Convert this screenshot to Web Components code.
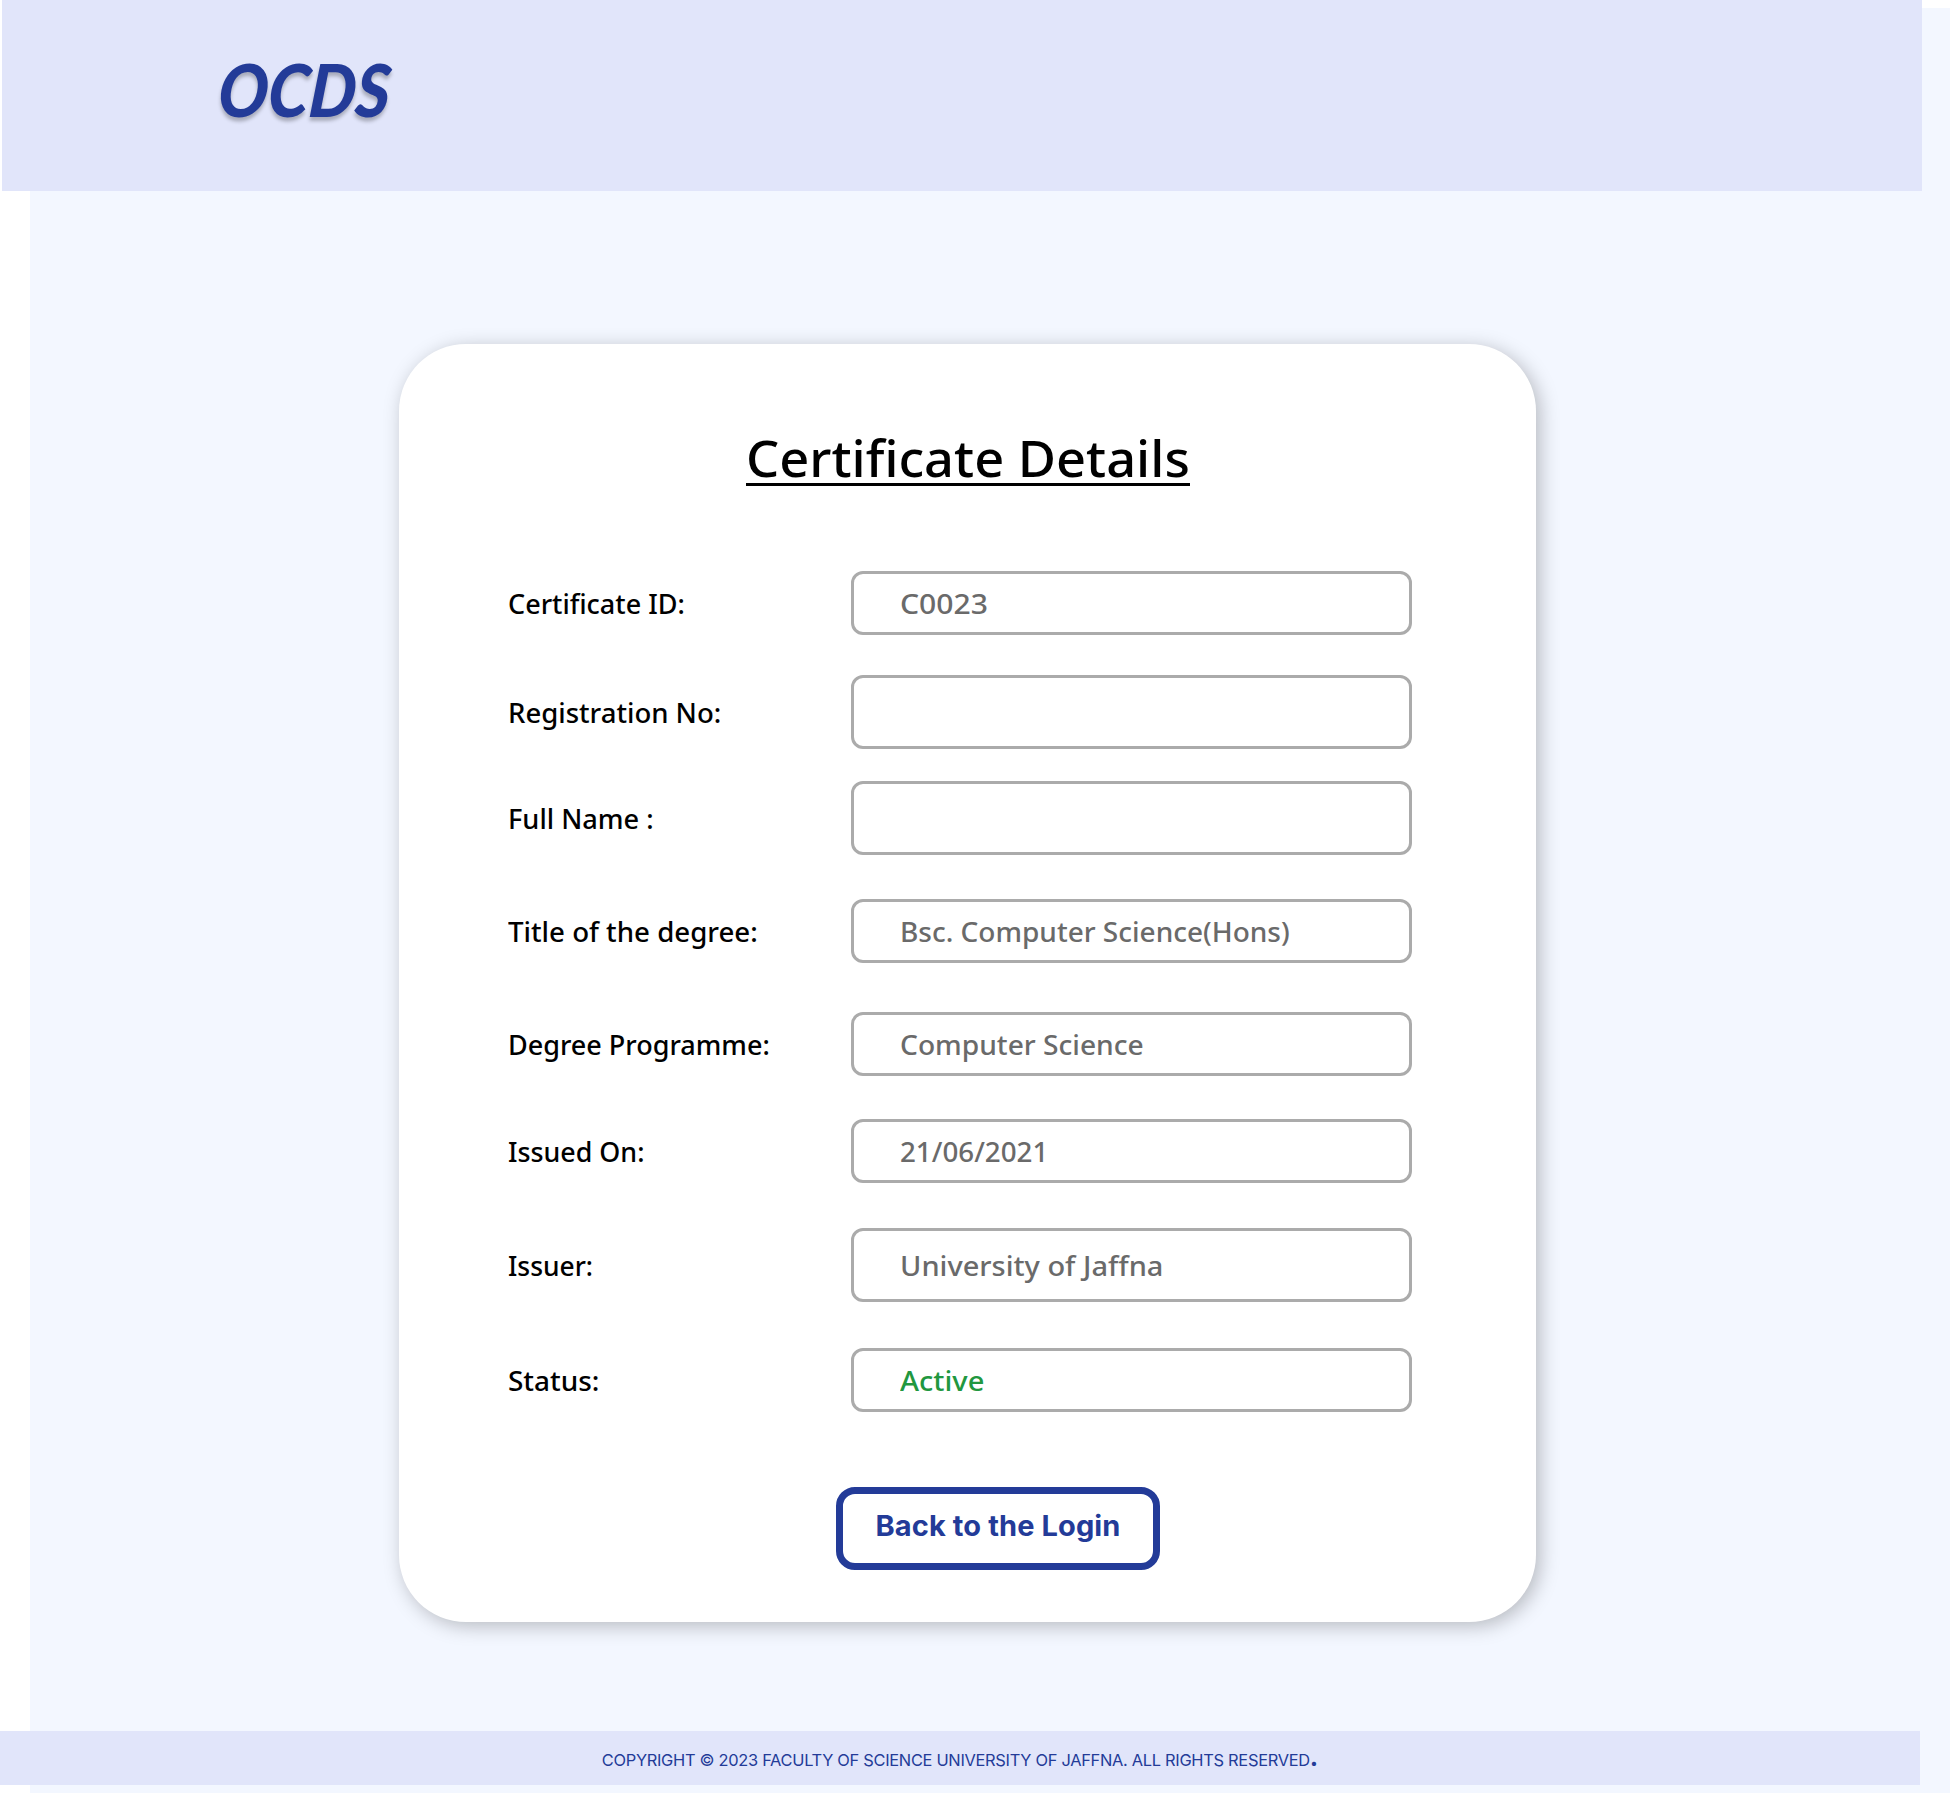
<!DOCTYPE html>
<html lang="en">
<head>
<meta charset="utf-8">
<title>OCDS - Certificate Details</title>
<style>
  body { margin: 0; background: #fff; font-family: "Noto Sans", "Open Sans", sans-serif; }
</style>
</head>
<body>
<ocds-page>
  <ocds-header slot="header"><fit-text width="172">OCDS</fit-text></ocds-header>
  <ocds-card>
    <ocds-title slot="title"><fit-text width="444">Certificate Details</fit-text></ocds-title>
    <ocds-field style="--gap:0px"><fit-text slot="label" width="177">Certificate ID:</fit-text><fit-text width="88">C0023</fit-text></ocds-field>
    <ocds-field style="--gap:40px;--h:74px"><fit-text slot="label" width="213">Registration No:</fit-text></ocds-field>
    <ocds-field style="--gap:32px;--h:74px"><fit-text slot="label" width="146">Full Name :</fit-text></ocds-field>
    <ocds-field style="--gap:44px"><fit-text slot="label" width="250">Title of the degree:</fit-text><fit-text width="390">Bsc. Computer Science(Hons)</fit-text></ocds-field>
    <ocds-field style="--gap:49px"><fit-text slot="label" width="262">Degree Programme:</fit-text><fit-text width="244">Computer Science</fit-text></ocds-field>
    <ocds-field style="--gap:43px"><fit-text slot="label" width="136">Issued On:</fit-text><fit-text width="148">21/06/2021</fit-text></ocds-field>
    <ocds-field style="--gap:45px;--h:74px"><fit-text slot="label" width="85">Issuer:</fit-text><fit-text width="263">University of Jaffna</fit-text></ocds-field>
    <ocds-field style="--gap:46px;--value:#21973f"><fit-text slot="label" width="91">Status:</fit-text><fit-text width="84">Active</fit-text></ocds-field>
    <ocds-button slot="action"><fit-text width="245" mode="track">Back to the Login</fit-text></ocds-button>
  </ocds-card>
  <ocds-footer slot="footer"><fit-text width="708" mode="track">COPYRIGHT © 2023 FACULTY OF SCIENCE UNIVERSITY OF JAFFNA. ALL RIGHTS RESERVED</fit-text></ocds-footer>
</ocds-page>

<script>
  const define = (name, html, ready) => customElements.define(name, class extends HTMLElement {
    connectedCallback() {
      if (this.shadowRoot) return;
      const t = document.createElement('template');
      t.innerHTML = html;
      this.attachShadow({ mode: 'open' }).append(t.content.cloneNode(true));
      if (ready) ready(this);
    }
  });

  define('ocds-page', `
    <style>
      :host { display: flex; flex-direction: column; width: 1950px; height: 1793px; overflow: hidden;
              background: linear-gradient(#f3f7ff, #f3f7ff) 30px 8px no-repeat, #fff; }
      main { flex: 1; display: flex; align-items: flex-start; padding: 153px 0 0 399px; }
    </style>
    <slot name="header"></slot>
    <main><slot></slot></main>
    <slot name="footer"></slot>`);

  define('ocds-header', `
    <style>
      :host { display: flex; align-items: center; box-sizing: border-box; width: 1920px; height: 191px;
              margin-left: 2px; padding-left: 217px; background: #e1e5fa; }
      div { font: italic 900 73px/88px Lato, sans-serif; color: #233b98; margin-top: -14px;
            text-shadow: 0 4px 4px rgba(0,0,0,.25); transform: skewX(-5deg); }
    </style>
    <div><slot></slot></div>`);

  define('ocds-card', `
    <style>
      :host { display: flex; flex-direction: column; box-sizing: border-box; width: 1137px; height: 1278px;
              padding-top: 85px; border-radius: 67px; background: #fff;
              box-shadow: 4px 4px 19px rgba(0,0,0,.25); }
      .head { display: flex; justify-content: center; height: 142px; }
      .fields { display: flex; flex-direction: column; padding-left: 108px; }
      .action { display: flex; padding: 75px 0 0 437px; }
    </style>
    <div class="head"><slot name="title"></slot></div>
    <div class="fields"><slot></slot></div>
    <div class="action"><slot name="action"></slot></div>`);

  define('ocds-title', `
    <style>
      :host { display: block; align-self: flex-start; padding-top: 4px; font-size: 50px; font-weight: 500;
              line-height: 50px; color: #000; border-bottom: 3px solid #000; }
    </style>
    <slot></slot>`);

  define('ocds-field', `
    <style>
      :host { display: flex; align-items: center; margin-top: var(--gap); height: var(--h, 64px);
              font-size: 27px; font-weight: 500; line-height: 36px; }
      .label { box-sizing: border-box; width: 344px; padding: 2px 0 0 1px; color: #000; }
      .box { display: flex; align-items: center; box-sizing: border-box; width: 561px; height: 100%;
             padding: 2px 0 0 46px; border: 3px solid #ababab; border-radius: 12px; color: var(--value, #6a6a6a); }
    </style>
    <div class="label"><slot name="label"></slot></div>
    <div class="box"><slot></slot></div>`);

  define('ocds-button', `
    <style>
      :host { display: block; }
      button { display: flex; align-items: center; justify-content: center; box-sizing: border-box;
               width: 324px; height: 83px; padding: 0 0 6px; border: 7px solid #233b98; border-radius: 19px;
               background: #fff; color: #233b98; font: 700 29px/36px Inter, sans-serif; }
    </style>
    <button><slot></slot></button>`);

  define('ocds-footer', `
    <style>
      :host { display: flex; align-items: center; justify-content: center; box-sizing: border-box;
              width: 1920px; height: 54px; margin-bottom: 8px; background: #e1e5fa;
              color: #233b98; font: 400 16.4px/24px Inter, sans-serif; }
      .line { display: flex; align-items: baseline; }
      b { font-size: 25px; line-height: 24px; }
    </style>
    <div class="line"><slot></slot><b>.</b></div>`);

  /* Sets a line of text to a fixed measure, by horizontal scale or by tracking. */
  define('fit-text', `<style>
      :host { display: block; white-space: nowrap; }
      span { display: inline-block; vertical-align: top; transform-origin: 0 50%; }
    </style><span><slot></slot></span>`, el => {
    const span = el.shadowRoot.querySelector('span');
    const target = +el.getAttribute('width');
    requestAnimationFrame(() => {
      const natural = span.getBoundingClientRect().width;
      el.style.width = target + 'px';
      if (el.getAttribute('mode') === 'track') span.style.letterSpacing = (target - natural) / el.textContent.length + 'px';
      else span.style.transform = `scaleX(${target / span.offsetWidth})`;
    });
  });
</script>
</body>
</html>
